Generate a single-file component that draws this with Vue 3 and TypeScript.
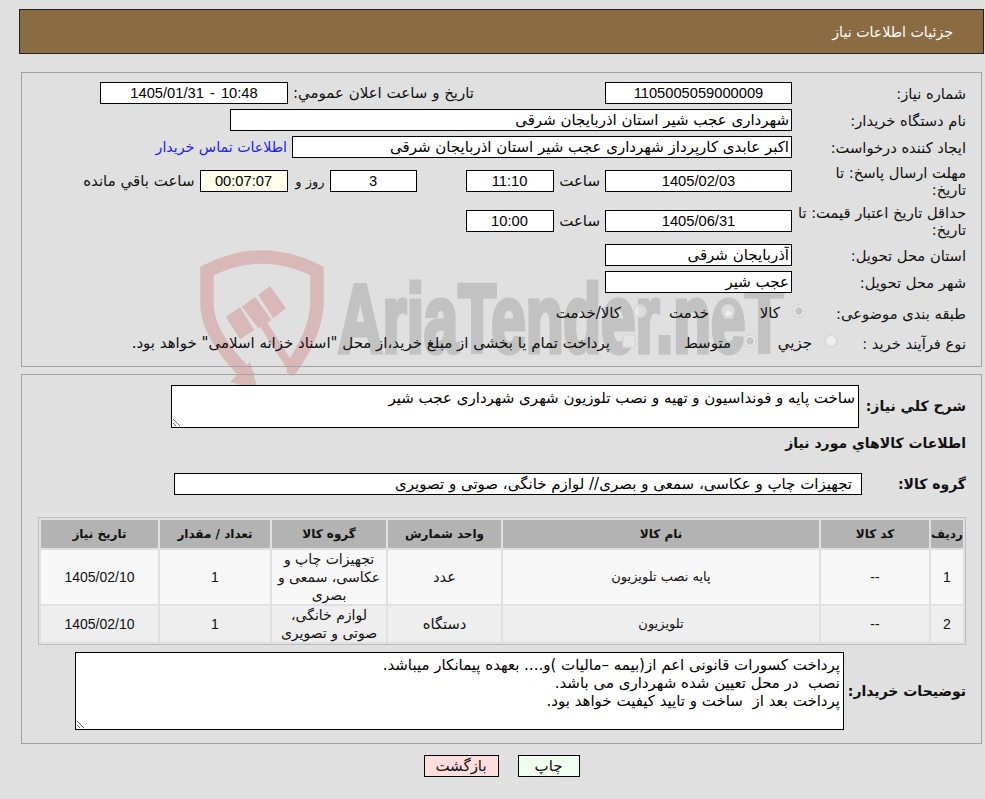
<script setup lang="ts">
interface Item {
  id: string
  code: string
  name: string
  unit: string
  group: string
  qty: string
  date: string
}

const items: Item[] = [
  { id: '1', code: '--', name: 'پایه نصب تلویزیون', unit: 'عدد', group: 'تجهیزات چاپ و\nعکاسی، سمعی و\nبصری', qty: '1', date: '1405/02/10' },
  { id: '2', code: '--', name: 'تلویزیون', unit: 'دستگاه', group: 'لوازم خانگی،\nصوتی و تصویری', qty: '1', date: '1405/02/10' },
]

const heads = ['ردیف', 'کد کالا', 'نام کالا', 'واحد شمارش', 'گروه کالا', 'تعداد / مقدار', 'تاریخ نیاز']

const buyerNote = `پرداخت کسورات قانونی اعم از(بیمه –مالیات )و.... بعهده پیمانکار میباشد.
نصب  در محل تعیین شده شهرداری می باشد.
پرداخت بعد از  ساخت و تایید کیفیت خواهد بود.`
</script>

<template>
  <div class="page">
    <svg class="mark" width="610" height="150" viewBox="190 245 610 150" aria-hidden="true">
      <path class="band" d="M250 378 Q207 335 207 305 V271 Q262 243 317 271 V305 Q315 335 290 370" />
      <path class="solid" d="M250 362 L230 382 L258 390 Z M286 372 L293 376 L307 352 L297 345 Z" />
      <path class="handle" d="M262 322 L294 372" />
      <path class="solid" d="M225.7 316.7 L240 307.3 L254.3 330 L240 339.3 Z M241.7 306.7 L255 296.7 L271.7 320 L258.3 328.3 Z M258.3 295 L270 286 L286 308.3 L273.3 318.3 Z" />
      <text class="brand" x="338" y="352" textLength="445" lengthAdjust="spacingAndGlyphs">AriaTender.neT</text>
    </svg>

    <header class="title"><span>جزئیات اطلاعات نیاز</span></header>

    <section class="panel first">
      <div class="row r22">
        <label class="lbl w174">شماره نیاز:</label>
        <input class="box num w187" readonly value="1105005059000009" />
        <span class="after-public">تاریخ و ساعت اعلان عمومي:</span>
        <input class="box num w188 spaced" readonly value="1405/01/31 - 10:48" />
      </div>
      <div class="row r22">
        <label class="lbl w174">نام دستگاه خریدار:</label>
        <input class="box start w562" readonly value="شهرداری عجب شیر استان اذربایجان شرقی" />
      </div>
      <div class="row r22">
        <label class="lbl w174">ایجاد کننده درخواست:</label>
        <input class="box start w500" readonly value="اکبر عابدی کارپرداز شهرداری عجب شیر استان اذربایجان شرقی" />
        <a class="contact">اطلاعات تماس خریدار</a>
      </div>
      <div class="row r36">
        <label class="lbl w174">مهلت ارسال پاسخ: تا<br />تاریخ:</label>
        <input class="box num w187" readonly value="1405/02/03" />
        <span class="hour">ساعت</span>
        <input class="box num w88" readonly value="11:10" />
        <input class="box num w87 gap49" readonly value="3" />
        <span class="days">روز و</span>
        <input class="box num w88 warm" readonly value="00:07:07" />
        <span class="left">ساعت باقي مانده</span>
      </div>
      <div class="row r36 pull">
        <label class="lbl w174">حداقل تاریخ اعتبار قیمت: تا<br />تاریخ:</label>
        <input class="box num w187" readonly value="1405/06/31" />
        <span class="hour">ساعت</span>
        <input class="box num w88" readonly value="10:00" />
      </div>
      <div class="row r22">
        <label class="lbl w174">استان محل تحویل:</label>
        <input class="box start w187" readonly value="آذربایجان شرقی" />
      </div>
      <div class="row r22">
        <label class="lbl w174">شهر محل تحویل:</label>
        <input class="box start w187" readonly value="عجب شیر" />
      </div>
      <div class="row r30">
        <label class="lbl w160">طبقه بندی موضوعی:</label>
        <span class="opt w71"><input type="radio" disabled checked name="cat" /><span>کالا</span></span>
        <span class="opt w88b"><input type="radio" disabled name="cat" /><span>خدمت</span></span>
        <span class="opt"><input type="radio" disabled name="cat" /><span>کالا/خدمت</span></span>
      </div>
      <div class="row r20">
        <label class="lbl w128">نوع فرآیند خرید :</label>
        <span class="opt w81"><input type="radio" disabled name="kind" /><span>جزیي</span></span>
        <span class="opt w121"><input type="radio" disabled checked name="kind" /><span>متوسط</span></span>
        <span class="opt"><input type="checkbox" disabled /><span>پرداخت تمام یا بخشی از مبلغ خرید،از محل "اسناد خزانه اسلامی" خواهد بود.</span></span>
      </div>
    </section>

    <section class="panel second">
      <div class="row need">
        <label class="lbl strong w107">شرح کلي نیاز:</label>
        <textarea class="area need-area" readonly>ساخت پایه و فونداسیون و تهیه و نصب تلوزیون شهری شهرداری عجب شیر</textarea>
      </div>
      <h2 class="strong sub">اطلاعات کالاهاي مورد نیاز</h2>
      <div class="row r22 grp">
        <label class="lbl strong w104">گروه کالا:</label>
        <input class="box group-box" readonly value="تجهیزات چاپ و عکاسی، سمعی و بصری// لوازم خانگی، صوتی و تصویری" />
      </div>
      <table class="grid">
        <colgroup>
          <col class="c1" /><col class="c2" /><col class="c3" /><col class="c4" /><col class="c5" /><col class="c6" /><col class="c7" />
        </colgroup>
        <thead>
          <tr><th v-for="h in heads" :key="h">{{ h }}</th></tr>
        </thead>
        <tbody>
          <tr v-for="it in items" :key="it.id">
            <td class="n">{{ it.id }}</td>
            <td class="n">{{ it.code }}</td>
            <td class="name">{{ it.name }}</td>
            <td>{{ it.unit }}</td>
            <td class="grp-cell">{{ it.group }}</td>
            <td class="n">{{ it.qty }}</td>
            <td class="n">{{ it.date }}</td>
          </tr>
        </tbody>
      </table>
      <div class="row note">
        <label class="lbl strong w122">توضیحات خریدار:</label>
        <textarea class="area note-area" readonly :value="buyerNote"></textarea>
      </div>
    </section>

    <footer class="actions">
      <button class="btn print" type="button">چاپ</button>
      <button class="btn back" type="button">بازگشت</button>
    </footer>
  </div>
</template>

<style>
html, body { margin: 0; background: #e0e0e0; }
</style>

<style scoped>
.page {
  position: relative;
  box-sizing: border-box;
  width: 985px;
  height: 799px;
  padding: 9px 1px 0 19px;
  background: #e0e0e0;
  direction: rtl;
  font-family: "DejaVu Sans", "Liberation Sans", sans-serif;
  font-size: 15px;
  color: #111;
  overflow: hidden;
}
.mark { position: absolute; left: 190px; top: 245px; }
.band { fill: none; stroke: #d9b8ba; stroke-width: 13.5px; }
.handle { fill: none; stroke: #d9b8ba; stroke-width: 8px; }
.solid { fill: #d9b8ba; }
.brand {
  font-family: "Liberation Sans", sans-serif;
  font-weight: 700;
  font-size: 96px;
  fill: #c2c2c2;
  stroke: #c2c2c2;
  stroke-width: 5px;
  direction: ltr;
}
.title {
  position: relative;
  box-sizing: border-box;
  height: 45px;
  padding-right: 30px;
  display: flex;
  align-items: center;
  background: #8b6c42;
  border: 1px solid #222;
  color: #fff;
  font-size: 14.2px;
}
.panel {
  position: relative;
  box-sizing: border-box;
  width: 961px;
  margin-right: 2px;
  border: 1px solid #a3a3a3;
  padding-right: 15px;
  padding-left: 16px;
}
.first { height: 295px; margin-top: 18px; padding-top: 9px; }
.second { height: 370px; margin-top: 7px; padding-top: 10px; }
.row { display: flex; align-items: center; margin-bottom: 5px; }
.r22 { height: 22px; }
.r36 { height: 36px; }
.r30 { height: 30px; }
.r20 { height: 20px; }
.pull { margin-top: -1px; }
.lbl { flex: none; line-height: 17px; font-size: 14.7px; }
.w174 { width: 174px; }
.w160 { width: 160px; }
.w128 { width: 128px; }
.w107 { width: 107px; }
.w104 { width: 104px; }
.w122 { width: 122px; }
.strong { font-weight: 700; font-size: 14px; }
.box {
  flex: none;
  box-sizing: border-box;
  height: 22px;
  margin: 0;
  border: 1px solid #000;
  border-radius: 0;
  outline: none;
  background: #fff;
  color: #000;
  font: inherit;
  padding: 0 2px;
  direction: rtl;
}
.num {
  direction: ltr;
  text-align: center;
  font-family: "Liberation Sans", sans-serif;
  font-size: 14.7px;
}
.spaced { word-spacing: 2px; }
.start { text-align: right; }
.w187 { width: 187px; }
.w188 { width: 188px; }
.w562 { width: 562px; }
.w500 { width: 500px; }
.w88 { width: 88px; }
.w87 { width: 87px; }
.warm { background: #ffffea; }
.after-public { width: 317px; padding-right: 131px; box-sizing: border-box; flex: none; }
.contact { margin-right: 5px; color: #1a1aff; flex: none; font-size: 14.2px; }
.hour { flex: none; width: 51.5px; box-sizing: border-box; padding-right: 5px; }
.gap49 { margin-right: 49px; }
.days { flex: none; width: 42px; box-sizing: border-box; padding-right: 5px; font-size: 13px; }
.left { flex: none; padding-right: 5px; }
.opt { flex: none; display: inline-flex; align-items: center; }
.opt input {
  appearance: none;
  box-sizing: border-box;
  flex: none;
  width: 14px;
  height: 14px;
  margin: -4px 0 0 12px;
  border: 2px solid rgba(214, 214, 214, .85);
  border-radius: 50%;
  background: rgba(255, 255, 255, .45);
}
.opt input:checked {
  background: radial-gradient(circle, #c6c6c6 0 3.5px, #f0f0f0 4px);
}
.opt input[type="checkbox"] {
  margin-top: -4px;
  border-radius: 2px;
  background: rgba(255, 255, 255, .55);
}
.w71 { width: 71px; }
.w88b { width: 88px; }
.w81 { width: 81px; }
.w121 { width: 121px; }
.need { height: 43px; margin-bottom: 0; }
.area {
  flex: none;
  box-sizing: border-box;
  margin: 0;
  border: 1px solid #000;
  border-radius: 0;
  outline: none;
  background: #fff;
  color: #000;
  font: inherit;
  padding: 3px;
  line-height: 18px;
  direction: rtl;
}
.need-area { width: 688px; height: 43px; }
.sub { margin: 6px 0 0; height: 18px; line-height: 18px; }
.grp { margin: 21px 0 0; }
.group-box { width: 688px; padding-right: 9px; text-align: right; }
.grid {
  width: 928px;
  margin-top: 22px;
  table-layout: fixed;
  border-collapse: separate;
  border-spacing: 2px;
  border: 1px solid #bdbdbd;
  font-size: 14.7px;
}
.c1 { width: 32px; } .c2 { width: 108px; } .c3 { width: 316px; } .c4 { width: 113px; }
.c5 { width: 114px; } .c6 { width: 110px; } .c7 { width: 117px; }
.grid th {
  height: 28px;
  padding: 0;
  background: #b3b3b3;
  font-weight: 700;
  font-size: 12px;
}
.grid td {
  padding: 0 1px;
  text-align: center;
  line-height: 18px;
}
.grid td.n { font-family: "Liberation Sans", sans-serif; font-size: 14px; }
.grid td.name { font-size: 13px; }
.grid td.grp-cell { font-size: 14px; white-space: pre-line; }
.grid tbody tr:nth-child(1) td { background: #f7f7f7; height: 54px; }
.grid tbody tr:nth-child(2) td { background: #eeeeee; height: 36px; }
.note { margin: 7px 0 0; height: 78px; }
.note-area { width: 769px; height: 78px; }
.actions {
  position: relative;
  display: flex;
  gap: 19px;
  direction: ltr;
  justify-content: center;
  margin-top: 11px;
  flex-direction: row-reverse;
}
.btn {
  box-sizing: border-box;
  height: 22px;
  margin: 0;
  padding: 0;
  border: 1px solid #000;
  border-radius: 0;
  font: inherit;
  color: #111;
}
.print { width: 62px; background: #eeffee; }
.back { width: 75px; background: #ffdddd; }
</style>
